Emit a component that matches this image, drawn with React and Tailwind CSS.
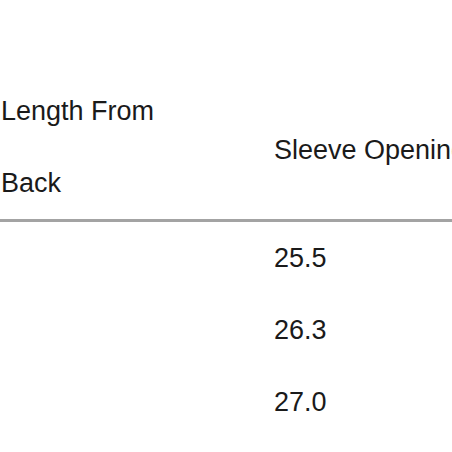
export default function App() {
  const rows = ['25.5', '26.3', '27.0'];

  return (
    <div className="w-[452px] h-[452px] overflow-hidden bg-white pt-[75px] font-['Liberation_Sans',Arial,sans-serif] text-[27px] text-[#1a1a1a]">
      <div className="w-[640px]">
        <div className="flex items-center border-b-[3px] border-[#a3a3a3]">
          <div className="w-[274px] pl-[1px] leading-[72px]">
            Length From
            <br />
            Back
          </div>
          <div className="leading-[72px] whitespace-nowrap pt-[6px]">Sleeve Opening</div>
        </div>
        {rows.map((val) => (
          <div key={val} className="flex leading-[72px]">
            <div className="w-[274px]">&nbsp;</div>
            <div>{val}</div>
          </div>
        ))}
      </div>
    </div>
  );
}
